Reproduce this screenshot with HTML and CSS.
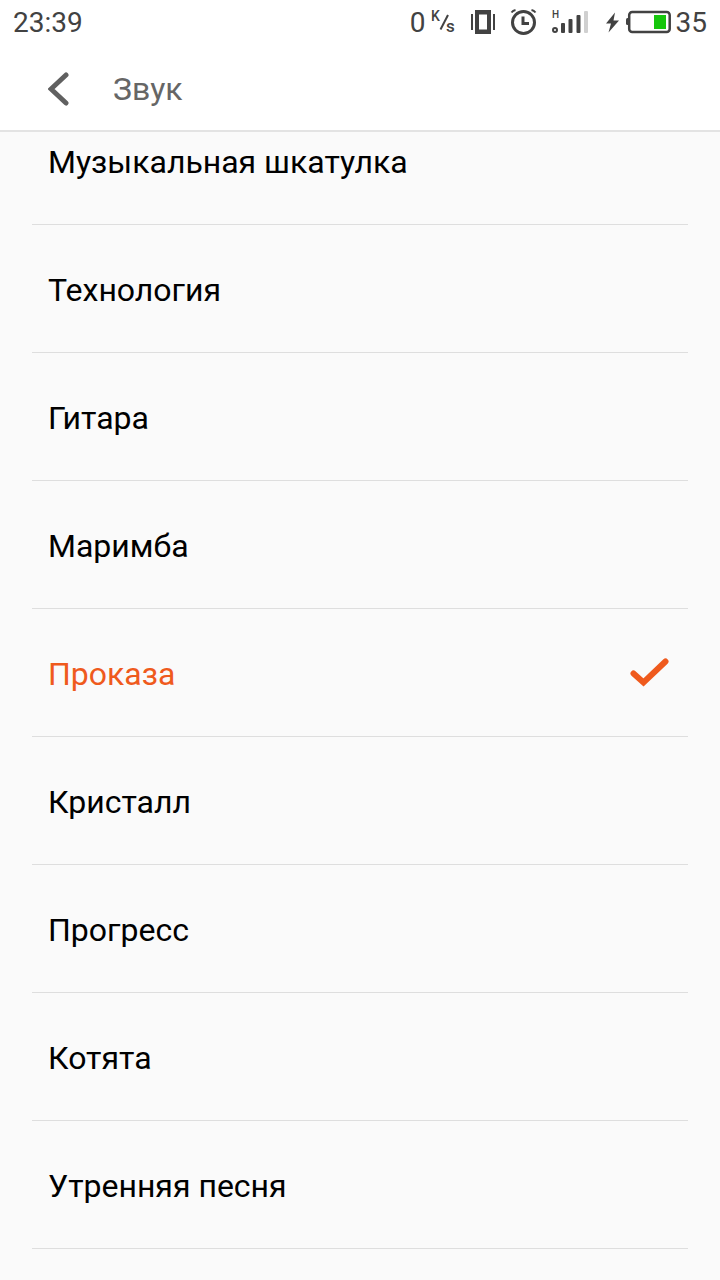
FILE: index.html
```html
<!DOCTYPE html>
<html lang="ru">
<head>
<meta charset="utf-8">
<meta name="viewport" content="width=device-width, initial-scale=1">
<title>Звук</title>
<link rel="stylesheet" href="styles.css">
</head>
<body>
<div class="screen">
  <header class="top">
    <div class="status">
      <time class="clock">23:39</time>
      <div class="indicators">
        <div class="group">
          <span>0</span>
          <svg width="27" height="46" viewBox="430 0 27 46" class="unit">
            <text x="431" y="21" class="unit-text">K</text>
            <path d="M448 15L440.500 29.500" class="line thin"/>
            <text x="446" y="32" class="unit-text small">s</text>
          </svg>
        </div>
        <svg width="25" height="46" viewBox="471 0 25 46">
          <path d="M472 14V30M494 14V30" class="line thin"/>
          <path fill-rule="evenodd" class="solid" d="M475 10H491V34H475ZM479 14.500V29.500H487V14.500Z"/>
        </svg>
        <svg width="27" height="46" viewBox="510 0 27 46">
          <circle cx="523.500" cy="22.500" r="11" class="line"/>
          <path d="M523 16.500V23.500H529" class="line"/>
          <path d="M511.500 12.500Q513 10.500 515.500 10M531.500 10Q534 10.500 535.500 12.500" class="line thin"/>
        </svg>
        <svg width="39" height="46" viewBox="551 0 39 46">
          <text x="552" y="18" class="net-text">H</text>
          <circle cx="555" cy="30" r="2" class="line thin"/>
          <rect class="solid" x="561" y="23" width="4" height="10" rx="1"/>
          <rect class="solid" x="568.500" y="19" width="4" height="14" rx="1"/>
          <rect class="solid" x="576.500" y="15" width="4" height="18" rx="1"/>
          <rect class="faint" x="584" y="11" width="4" height="22" rx="1"/>
        </svg>
        <div class="group">
          <svg width="18" height="46" viewBox="604 0 18 46">
            <path class="solid" d="M615 12.500L606 23.500H611L608.500 32.500L619 20.500H613.500Z"/>
          </svg>
          <svg width="46" height="46" viewBox="626 0 46 46">
            <rect x="629.200" y="12" width="40.500" height="20" rx="3" class="line medium"/>
            <path class="solid" d="M629 18H627.500Q626 18 626 19.500V23.500Q626 25 627.500 25H629Z"/>
            <rect x="654" y="15" width="12" height="14" class="charge"/>
          </svg>
          <span>35</span>
        </div>
      </div>
    </div>
    <div class="bar">
      <button type="button" class="back" aria-label="Назад">
        <svg width="24" height="36" viewBox="0 0 24 36"><path d="M18 4L3 18L18 32"/></svg>
      </button>
      <h1 class="title">Звук</h1>
    </div>
  </header>
  <main class="viewport">
    <div class="list" role="radiogroup" aria-label="Звук">
      <label class="row"><span>Музыкальная шкатулка</span><input type="radio" name="sound"></label>
      <label class="row"><span>Технология</span><input type="radio" name="sound"></label>
      <label class="row"><span>Гитара</span><input type="radio" name="sound"></label>
      <label class="row"><span>Маримба</span><input type="radio" name="sound"></label>
      <label class="row"><span>Проказа</span><input type="radio" name="sound" checked><svg class="tick" width="40" height="32" viewBox="0 0 40 32"><path d="M3.500 15.500L13.500 24.500L35.500 3.500"/></svg></label>
      <label class="row"><span>Кристалл</span><input type="radio" name="sound"></label>
      <label class="row"><span>Прогресс</span><input type="radio" name="sound"></label>
      <label class="row"><span>Котята</span><input type="radio" name="sound"></label>
      <label class="row"><span>Утренняя песня</span><input type="radio" name="sound"></label>
    </div>
  </main>
</div>
</body>
</html>
```
FILE: styles.css
```css
* {
  box-sizing: border-box;
}

body {
  margin: 0;
  background: #fafafa;
  color: #000;
  font-family: Roboto, "Noto Sans", sans-serif;
  font-size: 32px;
}

.screen {
  display: flex;
  flex-direction: column;
  height: 100vh;
  overflow: hidden;
}

.top {
  flex: none;
  background: #fff;
  border-bottom: 2px solid #e3e3e3;
}

.status {
  display: flex;
  justify-content: space-between;
  align-items: center;
  padding: 0 13px;
  color: #424242;
  font-size: 28px;
  line-height: 46px;
}

.indicators {
  display: flex;
  align-items: center;
  gap: 14px;
}

.group {
  display: flex;
  align-items: center;
  gap: 4px;
}

.status svg {
  display: block;
}

.solid {
  fill: #424242;
}

.faint {
  fill: #d0d0d0;
}

.charge {
  fill: #16c60c;
}

.line {
  fill: none;
  stroke: #424242;
  stroke-width: 3px;
}

.medium {
  stroke-width: 2.500px;
}

.thin {
  stroke-width: 2px;
}

.unit-text {
  fill: #424242;
  font-size: 14px;
  font-weight: 500;
}

.small {
  font-size: 17px;
}

.net-text {
  fill: #424242;
  font-size: 10px;
  font-weight: 500;
}

.bar {
  display: flex;
  align-items: center;
  gap: 41px;
  height: 84px;
  padding: 2px 48px 0 48px;
}

.back {
  display: flex;
  padding: 0;
  border: 0;
  background: none;
}

.back path {
  fill: none;
  stroke: #606060;
  stroke-width: 5px;
  stroke-linecap: round;
}

.title {
  margin: 0;
  color: #666;
  font-size: 32px;
  font-weight: 400;
}

.viewport {
  flex: 1;
  min-height: 0;
  overflow: hidden;
}

/* The list rests partly scrolled under the header. */
.list {
  margin: -35px 32px 0;
}

.row {
  display: flex;
  align-items: center;
  justify-content: space-between;
  height: 128px;
  padding: 2px 18px 0 16px;
  border-bottom: 1px solid #dedede;
}

.row input {
  appearance: none;
  width: 0;
  height: 0;
  margin: 0;
}

.row:has(input:checked) {
  color: #ef5a1d;
}

.tick path {
  fill: none;
  stroke: #ef5a1d;
  stroke-width: 6px;
  stroke-linecap: round;
}
```
